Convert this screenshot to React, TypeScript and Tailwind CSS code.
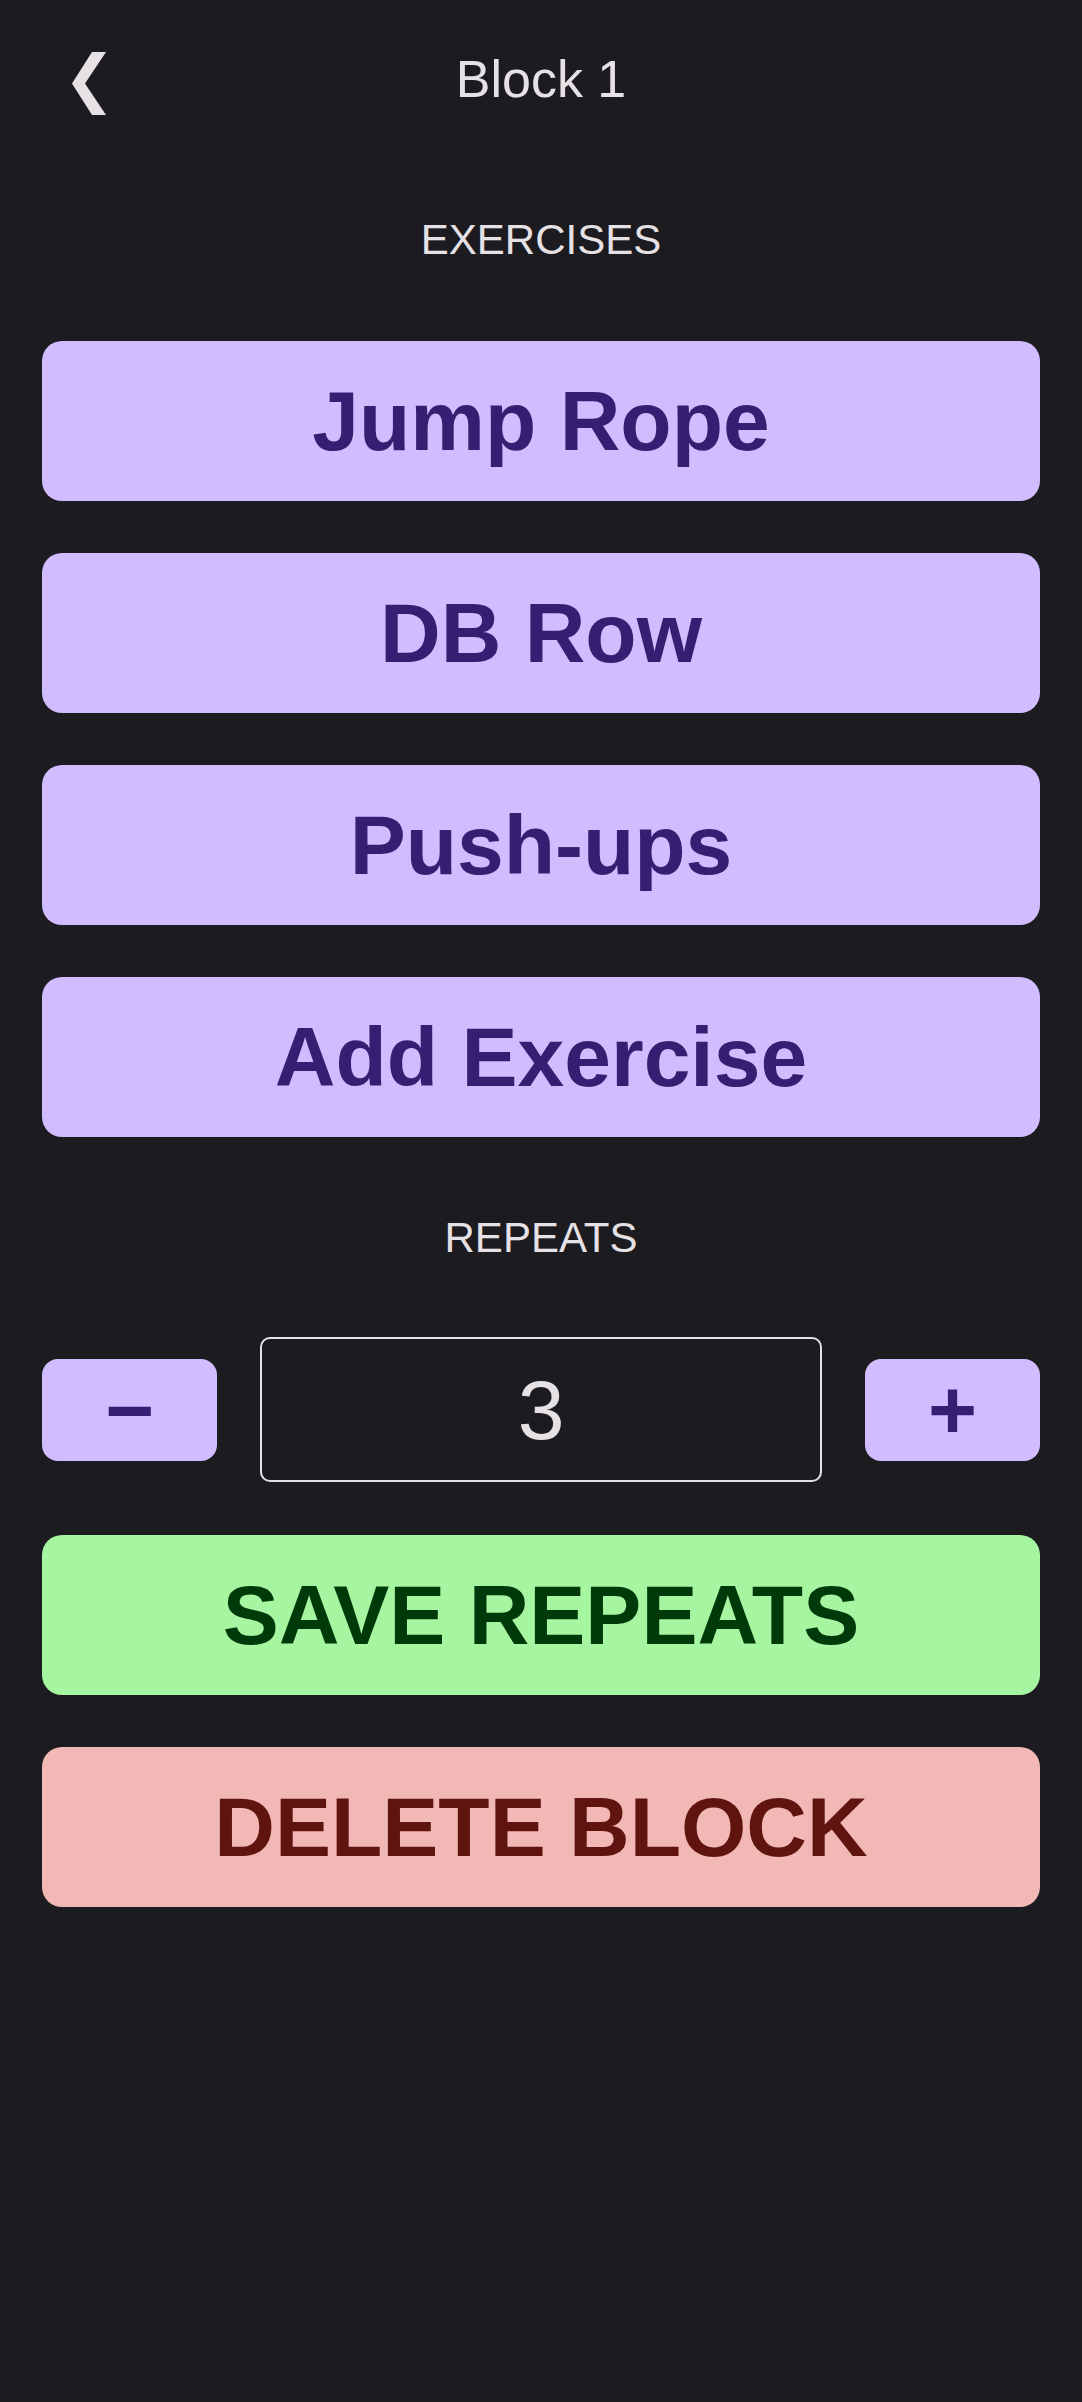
import React from "react";

const font = { fontFamily: '"Liberation Sans", Arial, sans-serif' };

// exercise rows of this block
const exercises = ["Jump Rope", "DB Row", "Push-ups", "Add Exercise"];

const BigButton = ({ label, className }: { label: string; className: string }) => (
  <button
    className={`w-full h-[160px] rounded-[20px] flex items-center justify-center text-[84px] font-bold ${className}`}
  >
    {label}
  </button>
);

export default function App() {
  return (
    <div className="w-full min-h-[2402px] bg-[#1c1b1f] text-[#e6e1e5]" style={font}>
      {/* top bar */}
      <div className="relative h-[159px] border-b border-[#17161a] flex items-center justify-center">
        <button className="absolute left-[72px] top-[52px] w-[34px] h-[63px]">
          <svg viewBox="0 0 34 63" className="w-[34px] h-[63px]">
            <polygon points="20,0 34,0 13,31.5 34,63 20,63 0,31.5" fill="#e6e1e5" />
          </svg>
        </button>
        <h1 className="text-[52px] leading-[52px] font-normal">Block 1</h1>
      </div>

      <div className="px-[42px]">
        <p className="pt-[60px] text-[42px] leading-[42px] text-center">EXERCISES</p>

        <div className="mt-[80px] flex flex-col gap-[52px]">
          {exercises.map((name) => (
            <BigButton key={name} label={name} className="bg-[#d0bcff] text-[#381e72]" />
          ))}
        </div>

        <p className="mt-[80px] text-[42px] leading-[42px] text-center">REPEATS</p>

        <div className="mt-[78px] flex items-center gap-[43px]">
          <button className="w-[175px] h-[102px] rounded-[16px] bg-[#d0bcff] text-[#381e72] text-[84px] font-bold flex items-center justify-center">
            −
          </button>
          <div className="flex-1 h-[145px] rounded-[10px] border-2 border-[#e6e1e5] flex items-center justify-center text-[84px]">
            3
          </div>
          <button className="w-[175px] h-[102px] rounded-[16px] bg-[#d0bcff] text-[#381e72] text-[84px] font-bold flex items-center justify-center">
            +
          </button>
        </div>

        <div className="mt-[53px] flex flex-col gap-[52px]">
          <BigButton label="SAVE REPEATS" className="bg-[#a6f5a0] text-[#003a0b]" />
          <BigButton label="DELETE BLOCK" className="bg-[#f2b8b5] text-[#601410]" />
        </div>
      </div>
    </div>
  );
}
